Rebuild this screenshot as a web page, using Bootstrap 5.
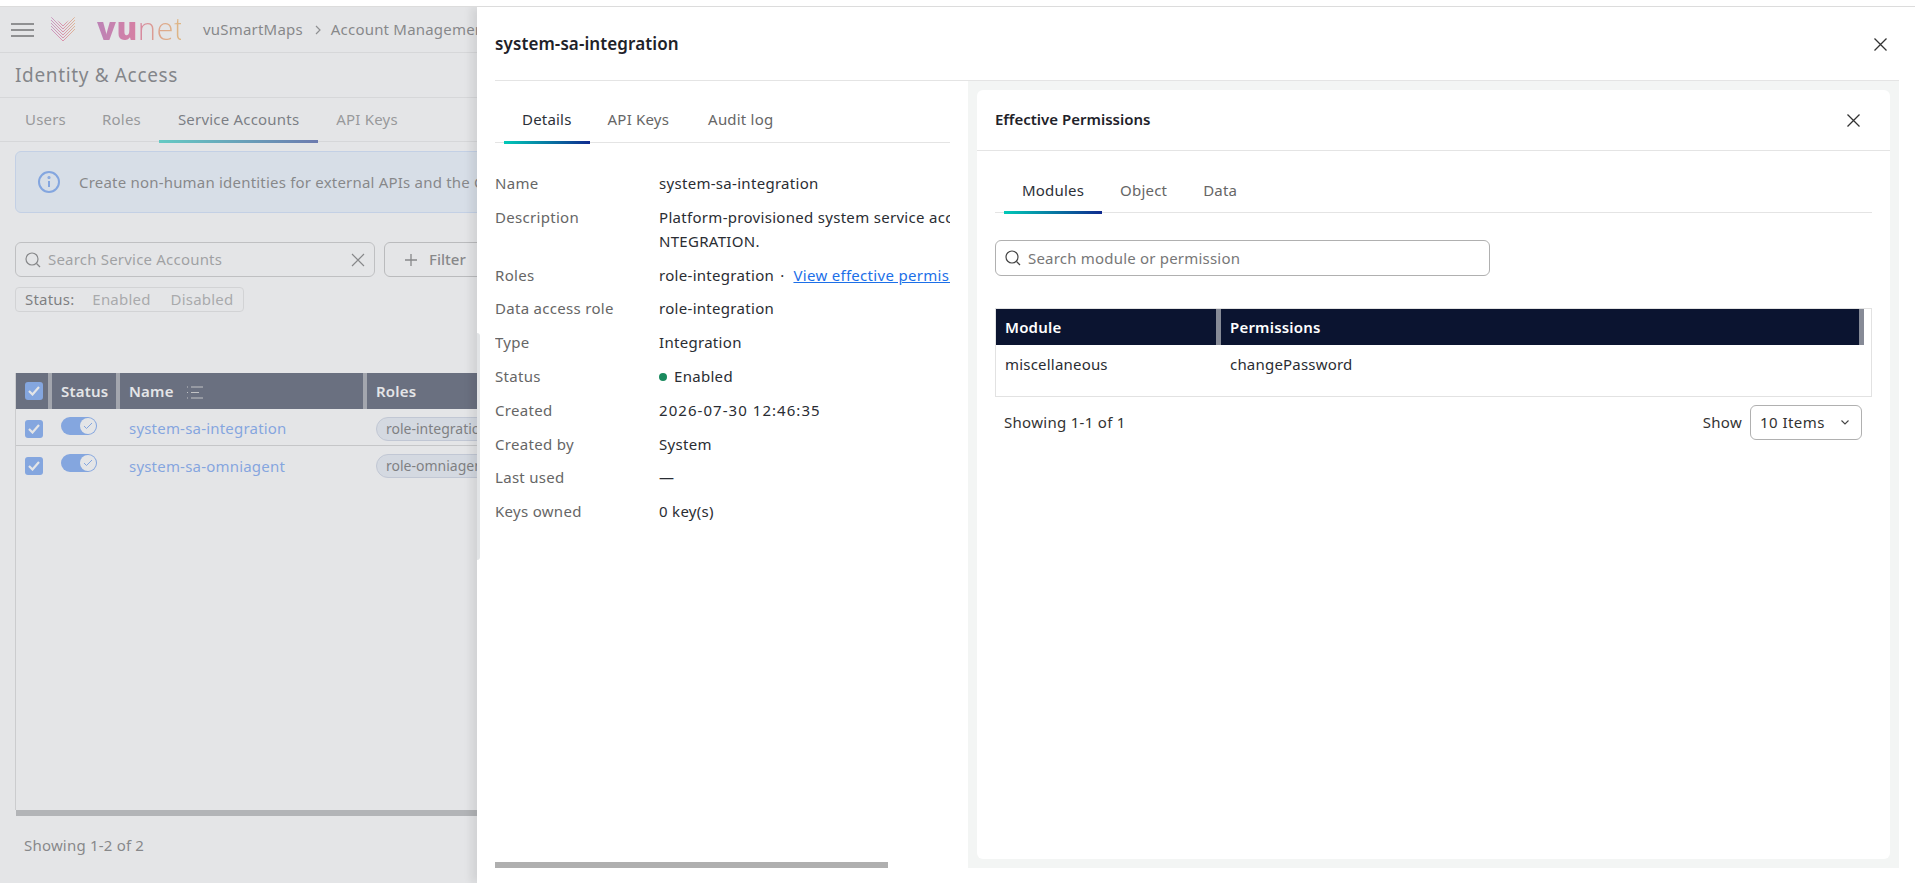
<!DOCTYPE html>
<html lang="en">
<head>
<meta charset="utf-8">
<title>Identity &amp; Access</title>
<link href="https://cdn.jsdelivr.net/npm/bootstrap@5.3.0/dist/css/bootstrap.min.css" rel="stylesheet">
<style>
html,body{height:100%;}
body{font-family:"Noto Sans","Open Sans",sans-serif;font-size:14px;letter-spacing:.2px;color:#21252b;background:#fff;overflow:hidden;position:relative;width:1915px;height:883px;}
.top-strip{height:7px;border-bottom:1px solid #dcdcdc;background:#fff;position:relative;z-index:5;}
.app-bar{height:46px;border-bottom:1px solid #e2e2e2;padding-left:11px;}
.burger{width:23px;height:14px;display:flex;flex-direction:column;justify-content:space-between;}
.burger i{display:block;height:2px;background:#555;}
.wordmark{font-family:"Open Sans",sans-serif;font-size:31px;line-height:1;letter-spacing:.5px;background:linear-gradient(90deg,#b03a9c 0%,#e0357a 45%,#f2824a 75%,#f2a33a 100%);-webkit-background-clip:text;background-clip:text;color:transparent;margin-left:21px;margin-top:-3px;width:84px;}
.wordmark b{font-weight:800;}
.wordmark span{font-weight:300;}
.crumbs{margin-left:22px;font-size:15px;color:#444;white-space:nowrap;display:flex;align-items:center;}
.crumbs svg{margin:0 10px 0 12px;}
.page-title{height:45px;border-bottom:1px solid #e2e2e2;padding-left:15px;font-size:19px;color:#3c3f44;letter-spacing:.65px;}
.page-tabs{height:44px;border-bottom:1px solid #e2e2e2;padding-left:7px;font-size:15px;}
.page-tabs a,.sub-tabs a{color:#666;text-decoration:none;display:block;position:relative;}
.page-tabs a{padding:0 18px;height:44px;line-height:42px;}
.page-tabs a.on{padding:0 19px;}
.page-tabs a.on,.sub-tabs a.on{color:#2c3038;}
.page-tabs a.on::after,.sub-tabs a.on::after{content:"";position:absolute;left:0;right:0;bottom:-1px;height:3px;background:linear-gradient(90deg,#00c9b7,#0f2a8f);}
.info-note{margin:9px 0 0 15px;height:62px;background:#e4f1ff;border:1px solid #bcd4fa;border-radius:6px 0 0 6px;padding-left:21px;gap:18px;font-size:15px;color:#444;white-space:nowrap;width:520px;overflow:hidden;}
.tool-row{margin:29px 0 0 15px;gap:9px;}
.search-box{height:35px;border:1px solid #b5b5b5;border-radius:6px;background:#fff;padding:0 9px;gap:7px;}
.search-box input{border:0;outline:0;flex:1;min-width:0;font-size:15px;letter-spacing:.2px;background:transparent;padding:0;color:#333;}
.search-box input::placeholder{color:#777;opacity:1;}
.search-page{width:360px;}
.filter-btn{height:35px;width:120px;border:1px solid #aaa;border-radius:6px;background:#fff;font-size:15px;font-weight:500;color:#444;padding:0 0 0 20px;gap:12px;text-align:left;}
.status-chip{margin:10px 0 0 15px;width:229px;height:25px;border:1px solid #dadada;border-radius:4px;padding-left:9px;font-size:15px;color:#333;gap:18px;}
.status-chip span{color:#888;}
.status-chip .chip-off{margin-left:2px;}
.grid-frame{margin:61px 0 0 15px;height:437px;border-left:1px solid #ccc;}
.sa-table{width:560px;table-layout:fixed;margin:0;--bs-table-bg:transparent;font-size:15px;border-collapse:separate;border-spacing:0;}
.sa-table th{background:#0b1430;color:#fff;font-weight:600;height:36px;padding:0 0 0 9px;border:0;border-right:4px solid #7d818c;vertical-align:middle;}
.sa-table td{height:37px;padding:3px 0 0 9px;border:0;vertical-align:middle;}
.sa-table tbody tr:first-child td{border-bottom:1px solid #c0c0c0;}
.sa-name{color:#3f80ee;}
.tick{width:18px;height:18px;border-radius:3px;background:#3f80ee;display:flex;align-items:center;justify-content:center;}
.switcher{width:36px;height:18px;border-radius:9px;background:#3f80ee;position:relative;margin-top:-6px;}
.switcher i{position:absolute;right:1px;top:1px;width:16px;height:16px;border-radius:50%;background:#fff;display:flex;align-items:center;justify-content:center;}
.role-pill{display:inline-block;height:24px;line-height:22px;border:1px solid #b8c2d8;border-radius:12px;background:#dfe6f2;padding:0 9px;font-size:14px;letter-spacing:0;color:#333;white-space:nowrap;}
.bar-left{height:6px;background:#9a9c9f;}
.foot-left{margin:18px 0 0 24px;font-size:15px;color:#444;}
.dim-layer{position:absolute;inset:7px 0 0 0;background:rgba(201,203,207,.5);z-index:2;}
.side-sheet{position:absolute;left:477px;right:0;top:7px;bottom:0;background:#fff;z-index:3;box-shadow:-6px 0 8px rgba(0,0,0,.08);}
.side-sheet::before{content:"";position:absolute;left:0;top:326px;width:3px;height:227px;background:#e2e4e6;border-radius:0 3px 3px 0;}
.sheet-head{height:74px;margin:0 16px 0 18px;border-bottom:1px solid #e4e4e4;padding-top:2px;}
.sheet-head h1{font-size:17px;font-weight:600;margin:0;color:#1e2229;letter-spacing:.1px;}
.close-x{background:none;border:0;padding:0;line-height:0;margin-right:12px;}
.sheet-body{height:787px;margin-right:16px;}
.pane-left{width:491px;padding:0 18px;flex:none;height:787px;display:flex;flex-direction:column;}
.sub-tabs{border-bottom:1px solid #e4e4e4;height:62px;padding:18px 0 0 9px;font-size:15px;gap:0;}
.sub-tabs a{padding:0 18px;height:44px;line-height:41px;}
.detail-tabs a:nth-child(3){margin-left:3px;}
.facts{display:grid;grid-template-columns:164px 1fr;margin:28px 0 0;overflow:hidden;font-size:15px;line-height:24px;letter-spacing:.3px;row-gap:9.8px;white-space:nowrap;flex:1;align-content:start;}
.facts dt{font-weight:400;color:#666;margin:0;}
.facts dd{margin:0;color:#2a2d33;}
.facts a{color:#1c6fe8;}
.facts .stamp{letter-spacing:1.05px;}
.mid-dot{margin:0 5px 0 6px;}
.dot-on{display:inline-block;width:8px;height:8px;border-radius:50%;background:#1a8a5e;margin-right:7px;vertical-align:1px;}
.bar-sheet{height:6px;width:393px;background:#afafaf;flex:none;}
.pane-right{flex:1;background:#f3f5f4;padding:9px;height:787px;}
.perm-card{background:#fff;border-radius:6px;height:769px;}
.perm-head{height:61px;border-bottom:1px solid #e4e4e4;padding:0 18px;}
.perm-head h2{font-size:15px;font-weight:600;margin:0 0 3px;color:#1e2229;letter-spacing:0;}
.perm-body{padding:0 18px;}
.perm-tabs{height:62px;}
.perm-tabs a{line-height:43px;}
.search-perm{width:495px;height:36px;margin-top:27px;border-color:#b0b0b0;}
.perm-grid{margin-top:32px;height:89px;border:1px solid #e2e2e2;}
.perm-table{margin:0;width:868px;table-layout:fixed;font-size:15px;--bs-table-bg:transparent;border-collapse:separate;border-spacing:0;}
.perm-table th{background:#0b1430;color:#fff;font-weight:600;height:36px;padding:0 0 0 9px;border:0;border-right:5px solid #868a96;vertical-align:middle;}
.perm-table td{border:0;padding:8px 0 0 9px;color:#2a2d33;}
.perm-foot{margin-top:8px;height:35px;padding:0 10px 0 9px;font-size:15px;letter-spacing:.3px;color:#333;}
.size-pick{width:112px;height:35px;border:1px solid #b0b0b0;border-radius:6px;background:#fff;font-size:15px;letter-spacing:.45px;color:#333;padding:0 12px 0 9px;}
</style>
</head>
<body>
<div class="top-strip"></div>
<nav class="app-bar d-flex align-items-center">
  <div class="burger"><i></i><i></i><i></i></div>
  <svg class="ms-3" width="26" height="28" viewBox="0 0 26 28" fill="none" stroke-width=".9">
    <defs>
      <linearGradient id="lg" gradientUnits="userSpaceOnUse" x1="0" x2="26" y1="0" y2="0"><stop offset="0" stop-color="#c056b0"/><stop offset=".5" stop-color="#e8487c"/><stop offset="1" stop-color="#f3a04a"/></linearGradient>
      <clipPath id="cp"><path d="M1 1 13 8 25 1V15L13 27 1 15Z"/></clipPath>
    </defs>
    <g stroke="url(#lg)" clip-path="url(#cp)">
      <polyline points="1,-2 13,10 25,-2"/>
      <polyline points="1,1 13,13 25,1"/>
      <polyline points="1,4 13,16 25,4"/>
      <polyline points="1,7 13,19 25,7"/>
      <polyline points="1,10 13,22 25,10"/>
      <polyline points="1,13 13,25 25,13"/>
      <polyline points="1,16 13,28 25,16"/>
    </g>
  </svg>
  <div class="wordmark"><b>vu</b><span>net</span></div>
  <div class="crumbs">vuSmartMaps<svg width="6" height="10" viewBox="0 0 6 10" fill="none" stroke="#555" stroke-width="1.200"><path d="M1 1l4 4-4 4"/></svg>Account Management</div>
</nav>
<div class="page-title d-flex align-items-center">Identity &amp; Access</div>
<div class="page-tabs d-flex">
  <a href="#">Users</a><a href="#">Roles</a><a href="#" class="on">Service Accounts</a><a href="#">API Keys</a>
</div>
<div class="info-note d-flex align-items-center">
  <svg width="24" height="24" viewBox="0 0 24 24" fill="none" stroke="#3f80ee" stroke-width="2"><circle cx="12" cy="12" r="10"/><path d="M12 11v6"/><circle cx="12" cy="7.500" r=".6" fill="#3f80ee"/></svg>
  <span>Create non-human identities for external APIs and the CLI</span>
</div>
<div class="tool-row d-flex">
  <div class="search-box search-page d-flex align-items-center">
    <svg width="16" height="16" viewBox="0 0 16 16" fill="none" stroke="#444" stroke-width="1.200"><circle cx="7" cy="7" r="6"/><path d="M11.500 11.500L15 15"/></svg>
    <input type="text" placeholder="Search Service Accounts">
    <svg width="14" height="14" viewBox="0 0 14 14" stroke="#444" stroke-width="1.200"><path d="M1 1l12 12M13 1L1 13"/></svg>
  </div>
  <button class="filter-btn d-flex align-items-center" type="button"><svg width="12" height="12" viewBox="0 0 12 12" stroke="#444" stroke-width="1.300"><path d="M6 0v12M0 6h12"/></svg>Filter</button>
</div>
<div class="status-chip d-flex align-items-center">Status: <span>Enabled</span><span class="chip-off">Disabled</span></div>
<div class="grid-frame">
  <table class="table sa-table">
    <colgroup><col style="width:36px"><col style="width:68px"><col style="width:247px"><col></colgroup>
    <thead><tr>
      <th><div class="tick"><svg width="12" height="10" viewBox="0 0 12 10" fill="none" stroke="#fff" stroke-width="2.200"><path d="M1 5l3.500 3.500L11 1"/></svg></div></th>
      <th>Status</th>
      <th>Name <svg class="ms-2" width="17" height="13" viewBox="0 0 17 13" fill="none" stroke="#bbb" stroke-width="1"><path d="M5 1h12M5 6.500h8M5 12h12"/><path d="M1 1h1M1 6.500h1M1 12h1"/></svg></th>
      <th class="border-0">Roles</th>
    </tr></thead>
    <tbody>
      <tr>
        <td><div class="tick"><svg width="12" height="10" viewBox="0 0 12 10" fill="none" stroke="#fff" stroke-width="2.200"><path d="M1 5l3.500 3.500L11 1"/></svg></div></td>
        <td><div class="switcher"><i><svg width="10" height="8" viewBox="0 0 10 8" fill="none" stroke="#3f80ee" stroke-width="1"><path d="M1 4l2.500 2.500L9 1"/></svg></i></div></td>
        <td class="sa-name">system-sa-integration</td>
        <td><span class="role-pill">role-integration</span></td>
      </tr>
      <tr>
        <td><div class="tick"><svg width="12" height="10" viewBox="0 0 12 10" fill="none" stroke="#fff" stroke-width="2.200"><path d="M1 5l3.500 3.500L11 1"/></svg></div></td>
        <td><div class="switcher"><i><svg width="10" height="8" viewBox="0 0 10 8" fill="none" stroke="#3f80ee" stroke-width="1"><path d="M1 4l2.500 2.500L9 1"/></svg></i></div></td>
        <td class="sa-name">system-sa-omniagent</td>
        <td><span class="role-pill">role-omniagent</span></td>
      </tr>
    </tbody>
  </table>
</div>
<div class="bar-left ms-3"></div>
<div class="foot-left">Showing 1-2 of 2</div>
<div class="dim-layer"></div>

<aside class="side-sheet">
  <div class="sheet-head d-flex align-items-center justify-content-between">
    <h1>system-sa-integration</h1>
    <button class="close-x" type="button" aria-label="Close"><svg width="13" height="13" viewBox="0 0 13 13" stroke="#333" stroke-width="1.300"><path d="M.5.500l12 12M12.500.500l-12 12"/></svg></button>
  </div>
  <div class="sheet-body d-flex">
    <section class="pane-left">
      <div class="sub-tabs detail-tabs d-flex">
        <a href="#" class="on">Details</a><a href="#">API Keys</a><a href="#">Audit log</a>
      </div>
      <dl class="facts">
        <dt>Name</dt><dd>system-sa-integration</dd>
        <dt>Description</dt><dd>Platform-provisioned system service account for VUNET_SYSTEM_SA_I<br>NTEGRATION.</dd>
        <dt>Roles</dt><dd>role-integration<span class="mid-dot">·</span><a href="#" class="ms-1">View effective permissions</a></dd>
        <dt>Data access role</dt><dd>role-integration</dd>
        <dt>Type</dt><dd>Integration</dd>
        <dt>Status</dt><dd><span class="dot-on"></span>Enabled</dd>
        <dt>Created</dt><dd class="stamp">2026-07-30 12:46:35</dd>
        <dt>Created by</dt><dd>System</dd>
        <dt>Last used</dt><dd>—</dd>
        <dt>Keys owned</dt><dd>0 key(s)</dd>
      </dl>
      <div class="bar-sheet"></div>
    </section>
    <section class="pane-right">
      <div class="perm-card">
        <div class="perm-head d-flex align-items-center justify-content-between">
          <h2>Effective Permissions</h2>
          <button class="close-x" type="button" aria-label="Close"><svg width="13" height="13" viewBox="0 0 13 13" stroke="#333" stroke-width="1.300"><path d="M.5.500l12 12M12.500.500l-12 12"/></svg></button>
        </div>
        <div class="perm-body">
          <div class="sub-tabs perm-tabs d-flex">
            <a href="#" class="on">Modules</a><a href="#">Object</a><a href="#">Data</a>
          </div>
          <div class="search-box search-perm d-flex align-items-center">
            <svg width="16" height="16" viewBox="0 0 16 16" fill="none" stroke="#444" stroke-width="1.200"><circle cx="7" cy="7" r="6"/><path d="M11.500 11.500L15 15"/></svg>
            <input type="text" placeholder="Search module or permission">
          </div>
          <div class="perm-grid">
            <table class="table perm-table">
              <colgroup><col style="width:225px"><col></colgroup>
              <thead><tr><th>Module</th><th>Permissions</th></tr></thead>
              <tbody><tr><td>miscellaneous</td><td>changePassword</td></tr></tbody>
            </table>
          </div>
          <div class="perm-foot d-flex align-items-center justify-content-between">
            <span>Showing 1-1 of 1</span>
            <div class="d-flex align-items-center gap-2">
              <span>Show</span>
              <div class="size-pick d-flex align-items-center justify-content-between"><span>10 Items</span><svg width="8" height="5" viewBox="0 0 8 5" fill="none" stroke="#444" stroke-width="1.100"><path d="M.5.500L4 4 7.500.500"/></svg></div>
            </div>
          </div>
        </div>
      </div>
    </section>
  </div>
</aside>
<script src="https://cdn.jsdelivr.net/npm/bootstrap@5.3.0/dist/js/bootstrap.bundle.min.js"></script>
</body>
</html>
